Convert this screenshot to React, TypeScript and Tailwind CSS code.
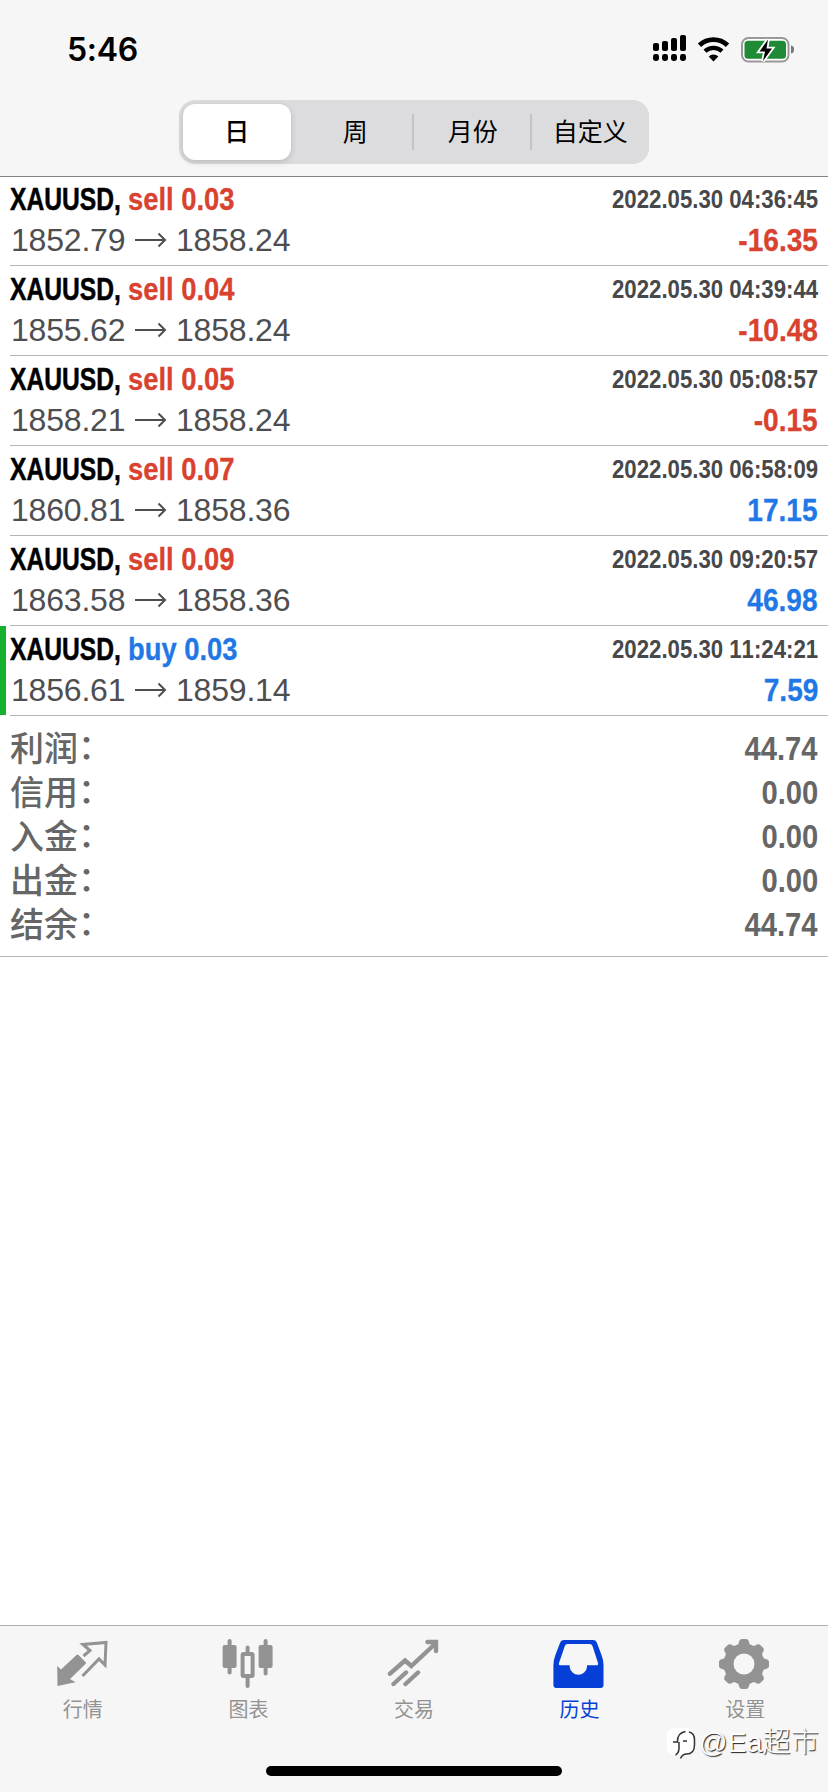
import type { ReactNode } from "react";

type Deal = {
  side: "sell" | "buy";
  volume: string;
  open: string;
  close: string;
  time: string;
  profit: string;
  marked?: boolean;
};

const deals: Deal[] = [
  { side: "sell", volume: "0.03", open: "1852.79", close: "1858.24", time: "2022.05.30 04:36:45", profit: "-16.35" },
  { side: "sell", volume: "0.04", open: "1855.62", close: "1858.24", time: "2022.05.30 04:39:44", profit: "-10.48" },
  { side: "sell", volume: "0.05", open: "1858.21", close: "1858.24", time: "2022.05.30 05:08:57", profit: "-0.15" },
  { side: "sell", volume: "0.07", open: "1860.81", close: "1858.36", time: "2022.05.30 06:58:09", profit: "17.15" },
  { side: "sell", volume: "0.09", open: "1863.58", close: "1858.36", time: "2022.05.30 09:20:57", profit: "46.98" },
  { side: "buy", volume: "0.03", open: "1856.61", close: "1859.14", time: "2022.05.30 11:24:21", profit: "7.59", marked: true },
];

const totals = [
  { label: "利润", value: "44.74" },
  { label: "信用", value: "0.00" },
  { label: "入金", value: "0.00" },
  { label: "出金", value: "0.00" },
  { label: "结余", value: "44.74" },
];

const periods = ["日", "周", "月份", "自定义"];

function StatusBar() {
  return (
    <div className="flex h-[100px] justify-between pl-[67px] pr-[34px]">
      <span className="mt-[30px] font-['Inter'] text-[32px] font-semibold leading-10 tracking-[-0.3px] text-black">
        5:46
      </span>
      <svg className="mt-[30px]" width="144" height="40" viewBox="650 30 144 40" aria-hidden="true">
        <rect x="653" y="43" width="6" height="8" rx="2" />
        <rect x="662" y="41" width="6" height="10" rx="2" />
        <rect x="671" y="38" width="6" height="13" rx="2" />
        <rect x="680" y="35" width="6" height="16" rx="2" />
        <rect x="653" y="54" width="6" height="7" rx="2.4" />
        <rect x="662" y="54" width="6" height="7" rx="2.4" />
        <rect x="671" y="54" width="6" height="7" rx="2.4" />
        <rect x="680" y="54" width="6" height="7" rx="2.4" />
        <path d="M699.5 45.3a20 20 0 0 1 28 0" fill="none" stroke="#000" strokeWidth="4.8" />
        <path d="M705 51.200a12.4 12.4 0 0 1 17 0" fill="none" stroke="#000" strokeWidth="4.4" />
        <path d="M713.5 61.500l-4.8-4.900a6.800 6.800 0 0 1 9.600 0z" />
        <rect x="742" y="38" width="46.5" height="23.500" rx="6.5" fill="#fff" stroke="#98989a" strokeWidth="2" />
        <rect x="744.500" y="40.800" width="41.500" height="18" rx="3.5" fill="#1f8b34" />
        <path d="M791 45.5c2.6.6 3 2 3 4s-.4 3.400-3 4z" fill="#777" />
        <path
          d="M768 39.500l-8.500 12h5.500l-2 9.500 9-12.500h-5.500z"
          fill="#000"
          stroke="#fff"
          strokeWidth="3.600"
          paintOrder="stroke"
        />
      </svg>
    </div>
  );
}

function PeriodPicker() {
  return (
    <div className="mx-auto flex h-16 w-[470px] rounded-[16px] bg-[#dcdcde] font-['Liberation_Sans','Noto_Sans_CJK_SC',sans-serif] text-[25px] text-black">
      {periods.map((p, i) => (
        <div key={p} className="flex w-1/4 items-center justify-center">
          {i === 0 ? (
            <span className="mr-[2px] flex h-14 w-[108px] items-center justify-center rounded-[12px] bg-white pt-[2px] font-medium shadow-[0_2px_6px_rgba(0,0,0,0.16)]">
              {p}
            </span>
          ) : (
            <span className="flex-1 pt-[2px] text-center">{p}</span>
          )}
          {(i === 1 || i === 2) && <i className="-ml-[2px] h-9 w-[2px] bg-[#c3c3c6]" />}
        </div>
      ))}
    </div>
  );
}

function DealRow({ deal, first }: { deal: Deal; first: boolean }) {
  const profitColor = deal.profit.startsWith("-") ? "text-[#d8422f]" : "text-[#1f78e6]";
  return (
    <li className={`flex ${first ? "h-[89px]" : "h-[90px]"}`}>
      <i className={`w-[6px] ${deal.marked ? "mb-px bg-[#16b12c]" : ""}`} />
      <div className="ml-1 flex flex-1 flex-col justify-end border-b border-[#b5b5b8] pb-[5px] pr-[10px] font-['Liberation_Sans',sans-serif]">
        <div className="flex h-10 items-center font-bold [font-kerning:none]">
          <span className="w-[118px] origin-left scale-x-[0.77] whitespace-nowrap text-[32px] leading-10 text-black [-webkit-text-stroke:0.5px]">
            XAUUSD,
          </span>
          <span
            className={`origin-left scale-x-[0.855] whitespace-nowrap text-[32px] leading-10 [-webkit-text-stroke:0.3px] ${
              deal.side === "sell" ? "text-[#d8422f]" : "text-[#1f78e6]"
            }`}
          >
            {deal.side} {deal.volume}
          </span>
          <span className="ml-auto origin-right scale-x-[0.888] text-[25px] leading-10 text-[#48484a]">{deal.time}</span>
        </div>
        <div className="mt-px flex h-10 items-center justify-between">
          <span className="flex items-center pl-px text-[32px] leading-10 tracking-[-0.2px] text-[#4e4e50]">
            <span className="w-[124px]">{deal.open}</span>
            <svg className="mr-[9px]" width="32" height="16" viewBox="0 0 32 16" fill="none" stroke="#4e4e50" strokeWidth="2" aria-hidden="true">
              <path d="M0 8h30M23.500 1.500L30 8l-6.500 6.500" />
            </svg>
            <span>{deal.close}</span>
          </span>
          <span
            className={`origin-right scale-x-[0.905] pt-[2px] text-[31px] font-bold leading-10 [-webkit-text-stroke:0.3px] [font-kerning:none] ${profitColor}`}
          >
            {deal.profit}
          </span>
        </div>
      </div>
    </li>
  );
}

function Totals() {
  return (
    <dl className="border-b border-[#b5b5b8] px-[10px] pb-[9px] pt-[11px] text-[#666]">
      {totals.map((t) => (
        <div key={t.label} className="flex h-11 items-center justify-between">
          <dt className="flex font-['Liberation_Sans','Noto_Sans_CJK_SC',sans-serif] text-[34px] font-medium leading-[44px]">
            {t.label}
            <span
              lang="zh-TW"
              className="font-['Liberation_Sans','Noto_Sans_CJK_TC',sans-serif] [font-feature-settings:'halt']"
            >
              ：
            </span>
          </dt>
          <dd className="origin-right scale-x-[0.885] font-['Liberation_Sans',sans-serif] text-[33px] font-bold leading-[44px]">
            {t.value}
          </dd>
        </div>
      ))}
    </dl>
  );
}

function Tab({ label, active, children }: { label: string; active?: boolean; children: ReactNode }) {
  return (
    <div className={`flex flex-1 flex-col items-center ${active ? "text-[#053fd8]" : "text-[#939393]"}`}>
      <svg className="mt-[10px]" width="54" height="54" viewBox="0 0 54 54" fill="currentColor" aria-hidden="true">
        {children}
      </svg>
      <span className="mt-[5px] font-['Noto_Sans_CJK_SC',sans-serif] text-[20px] leading-7">{label}</span>
    </div>
  );
}

const teeth = [0, 45, 90, 135, 180, 225, 270, 315];

function TabBar() {
  return (
    <nav className="relative flex h-[167px] border-t border-[#b0b0b2] bg-[#f6f6f6]">
      <Tab label="行情">
        <path d="M1.200 30l3.800 3.500L20.500 19q1-.8 2 0l7 7q1 1 0 2L14 43l5.500 3.300L1.500 50z" />
        <path d="M27.500 20l6.500-5.500-7-6 23-2-1 22.500-6-6-16.500 17" fill="none" stroke="currentColor" strokeWidth="3" />
      </Tab>
      <Tab label="图表">
        <rect x="1.600" y="9" width="14" height="23" rx="2" />
        <rect x="6.600" y="3" width="4" height="35.500" rx="2" />
        <rect x="37.600" y="9" width="14" height="23" rx="2" />
        <rect x="42.600" y="3" width="4" height="36.500" rx="2" />
        <rect x="21.600" y="18" width="10" height="22" rx="1" fill="none" stroke="currentColor" strokeWidth="4" />
        <path d="M26.600 11.500v5M26.600 42v8" stroke="currentColor" strokeWidth="4" strokeLinecap="round" />
      </Tab>
      <Tab label="交易">
        <path
          d="M3 37.700L18 24.500l6.300 5.500L49 7M40.500 6H49v9M6.500 48L19 36.500M18.500 48L31 36.500"
          fill="none"
          stroke="currentColor"
          strokeWidth="4.400"
          strokeLinecap="round"
        />
      </Tab>
      <Tab label="历史" active>
        <path
          fillRule="evenodd"
          d="M11 4h29q3 0 4 3l4.500 12q2 5 2 10v20q0 3-3 3H3.400q-3 0-3-3V29q0-5 2-10L7 7q1-3 4-3zM14.500 8q-2 0-2.700 2L6 27q-.6 2.300 1.500 2.300h9.200v1.700a8.700 8.700 0 0 0 17.300 0v-1.700h9.500q2.100 0 1.500-2.300L39.500 10q-.7-2-2.700-2z"
        />
      </Tab>
      <Tab label="设置">
        <circle cx="26" cy="28" r="15.500" fill="none" stroke="currentColor" strokeWidth="10" />
        {teeth.map((angle) => (
          <path
            key={angle}
            transform={`rotate(${angle} 26 28)`}
            d="M17.500 12q2.500-1.500 3.200-5 .8-4 3.300-4h4q2.500 0 3.300 4 .7 3.500 3.200 5z"
          />
        ))}
      </Tab>
      <span className="absolute bottom-4 left-[266px] h-[10px] w-[296px] rounded-full bg-black" />
      <div className="absolute left-[667px] top-[99px] flex items-center text-white">
        <svg width="32" height="36" viewBox="0 0 32 36" aria-hidden="true">
          <rect x="0" y="3" width="27" height="27" rx="7" fill="#fff" />
          <path
            d="M6 17h4.500q-.5-9 8-10.500M12 17v6q0 5-3.500 7M16 16h4M22 7q5.500 1 5.500 8v5q0 9-8 9-4 0-6 4.500"
            fill="none"
            stroke="#333"
            strokeWidth="1.500"
          />
        </svg>
        <span className="whitespace-nowrap font-['Liberation_Sans','Noto_Sans_CJK_SC',sans-serif] text-[28px] font-light leading-9 tracking-[0.3px] [text-shadow:1px_1px_1px_#222]">
          @Ea超市
        </span>
      </div>
    </nav>
  );
}

export default function App() {
  return (
    <div className="flex h-[1792px] w-[828px] flex-col overflow-hidden bg-white">
      <header className="h-[177px] border-b border-[#828286] bg-[#f6f6f6]">
        <StatusBar />
        <PeriodPicker />
      </header>
      <main className="flex-1">
        <ul>
          {deals.map((d, i) => (
            <DealRow key={d.time} deal={d} first={i === 0} />
          ))}
        </ul>
        <Totals />
      </main>
      <TabBar />
    </div>
  );
}
